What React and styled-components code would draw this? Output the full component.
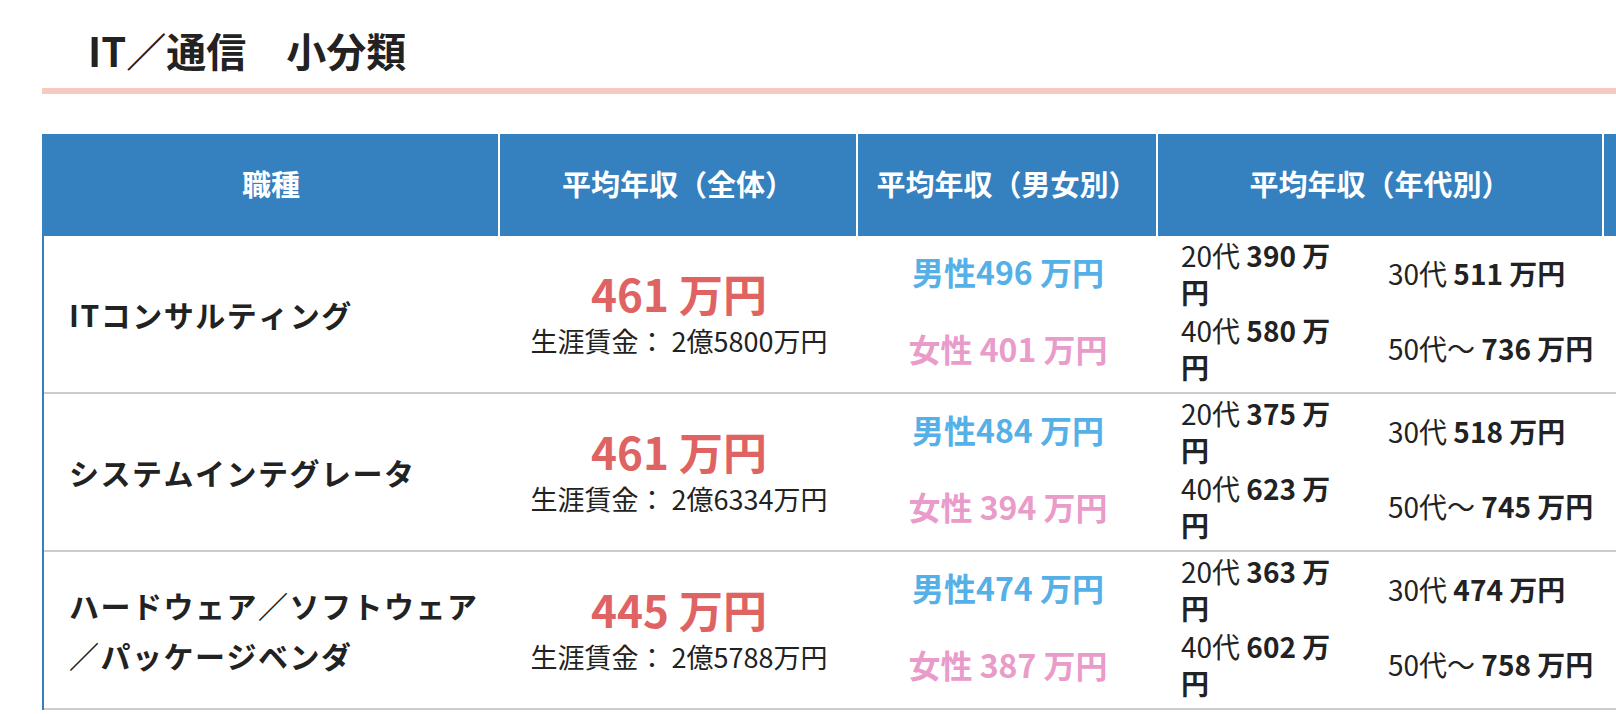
import styled, { createGlobalStyle } from 'styled-components';

const GlobalStyle = createGlobalStyle`
  html, body {
    margin: 0;
    padding: 0;
    background: #fff;
    overflow-x: hidden;
  }
  body {
    font-family: 'Noto Sans CJK JP', 'Noto Sans', sans-serif;
    font-kerning: none;
    color: #222;
  }
`;

const rows = [
  {
    id: 1,
    name: 'ITコンサルティング',
    avg: 461,
    lifetime: '2億5800万円',
    male: '男性496 万円',
    female: '女性 401 万円',
    ages: [390, 511, 580, 736],
  },
  {
    id: 2,
    name: 'システムインテグレータ',
    avg: 461,
    lifetime: '2億6334万円',
    male: '男性484 万円',
    female: '女性 394 万円',
    ages: [375, 518, 623, 745],
  },
  {
    id: 3,
    name: 'ハードウェア／ソフトウェア／パッケージベンダ',
    avg: 445,
    lifetime: '2億5788万円',
    male: '男性474 万円',
    female: '女性 387 万円',
    ages: [363, 474, 602, 758],
  },
];

const columns = '456px 358px 300px 446px 240px';

const App = () => {
  return (
    <St.Page>
      <GlobalStyle />
      <St.Title>IT／通信　小分類</St.Title>
      <St.Table>
        <St.HeadRow>
          <St.HeadCell>職種</St.HeadCell>
          <St.HeadCell>平均年収（全体）</St.HeadCell>
          <St.HeadCell>平均年収（男女別）</St.HeadCell>
          <St.HeadCell>平均年収（年代別）</St.HeadCell>
          <St.HeadCell />
        </St.HeadRow>
        {rows.map(row => (
          <St.BodyRow key={row.id}>
            <St.NameCell>{row.name}</St.NameCell>
            <St.AvgCell>
              <St.AvgValue>{row.avg} 万円</St.AvgValue>
              <St.Lifetime>生涯賃金： {row.lifetime}</St.Lifetime>
            </St.AvgCell>
            <St.GenderCell>
              <St.GenderValue color="#56b0e8">{row.male}</St.GenderValue>
              <St.GenderValue color="#e99bc9">{row.female}</St.GenderValue>
            </St.GenderCell>
            <St.AgeCell>
              <St.AgeItem>
                20代 <b>{row.ages[0]} 万円</b>
              </St.AgeItem>
              <St.AgeItem>
                30代 <b>{row.ages[1]} 万円</b>
              </St.AgeItem>
              <St.AgeItem>
                40代 <b>{row.ages[2]} 万円</b>
              </St.AgeItem>
              <St.AgeItem>
                50代〜 <b>{row.ages[3]} 万円</b>
              </St.AgeItem>
            </St.AgeCell>
            <div />
          </St.BodyRow>
        ))}
      </St.Table>
    </St.Page>
  );
};

const St = {
  Page: styled.div`
    padding: 22px 0 0 42px;
    overflow: hidden;
  `,
  Title: styled.h2`
    margin: 0;
    padding: 0 0 10px 46px;
    border-bottom: 6px solid #f6cabf;

    font-size: 40px;
    font-weight: 700;
    line-height: 56px;
    color: #222;
  `,
  Table: styled.div`
    margin-top: 40px;
    width: max-content;
    border-left: 2px solid #3580bf;
  `,
  HeadRow: styled.div`
    display: grid;
    grid-template-columns: ${columns};
    height: 102px;
    background: #3580bf;
  `,
  HeadCell: styled.div`
    display: flex;
    align-items: center;
    justify-content: center;

    padding-bottom: 4px;
    border-right: 2px solid #fff;

    color: #fff;
    font-size: 29px;
    font-weight: 700;
  `,
  BodyRow: styled.div`
    display: grid;
    grid-template-columns: ${columns};
    height: 156px;
    border-bottom: 2px solid #ccc;
  `,
  NameCell: styled.div`
    display: flex;
    align-items: center;

    padding: 0 6px 0 25px;

    font-size: 30px;
    font-weight: 700;
    letter-spacing: 1.5px;
    line-height: 50px;
  `,
  AvgCell: styled.div`
    display: flex;
    flex-direction: column;
    align-items: center;
    justify-content: center;

    padding-bottom: 2px;
  `,
  AvgValue: styled.div`
    font-size: 44px;
    font-weight: 700;
    line-height: 52px;
    color: #e06363;
  `,
  Lifetime: styled.div`
    margin-top: 4px;

    font-size: 27px;
    line-height: 36px;
  `,
  GenderCell: styled.div`
    display: grid;
    grid-template-rows: 1fr 1fr;
    row-gap: 8px;
    align-items: center;
    justify-items: center;

    padding-bottom: 10px;
  `,
  GenderValue: styled.div`
    font-size: 32px;
    font-weight: 700;
    line-height: 40px;
    color: ${props => props.color};
  `,
  AgeCell: styled.div`
    display: grid;
    grid-template-columns: 160px 1fr;
    grid-template-rows: 1fr 1fr;
    align-items: center;
    column-gap: 47px;

    padding: 0 0 6px 23px;

    font-size: 28px;
    line-height: 37px;

    & b {
      font-weight: 700;
    }
  `,
  AgeItem: styled.div``,
};

export default App;
